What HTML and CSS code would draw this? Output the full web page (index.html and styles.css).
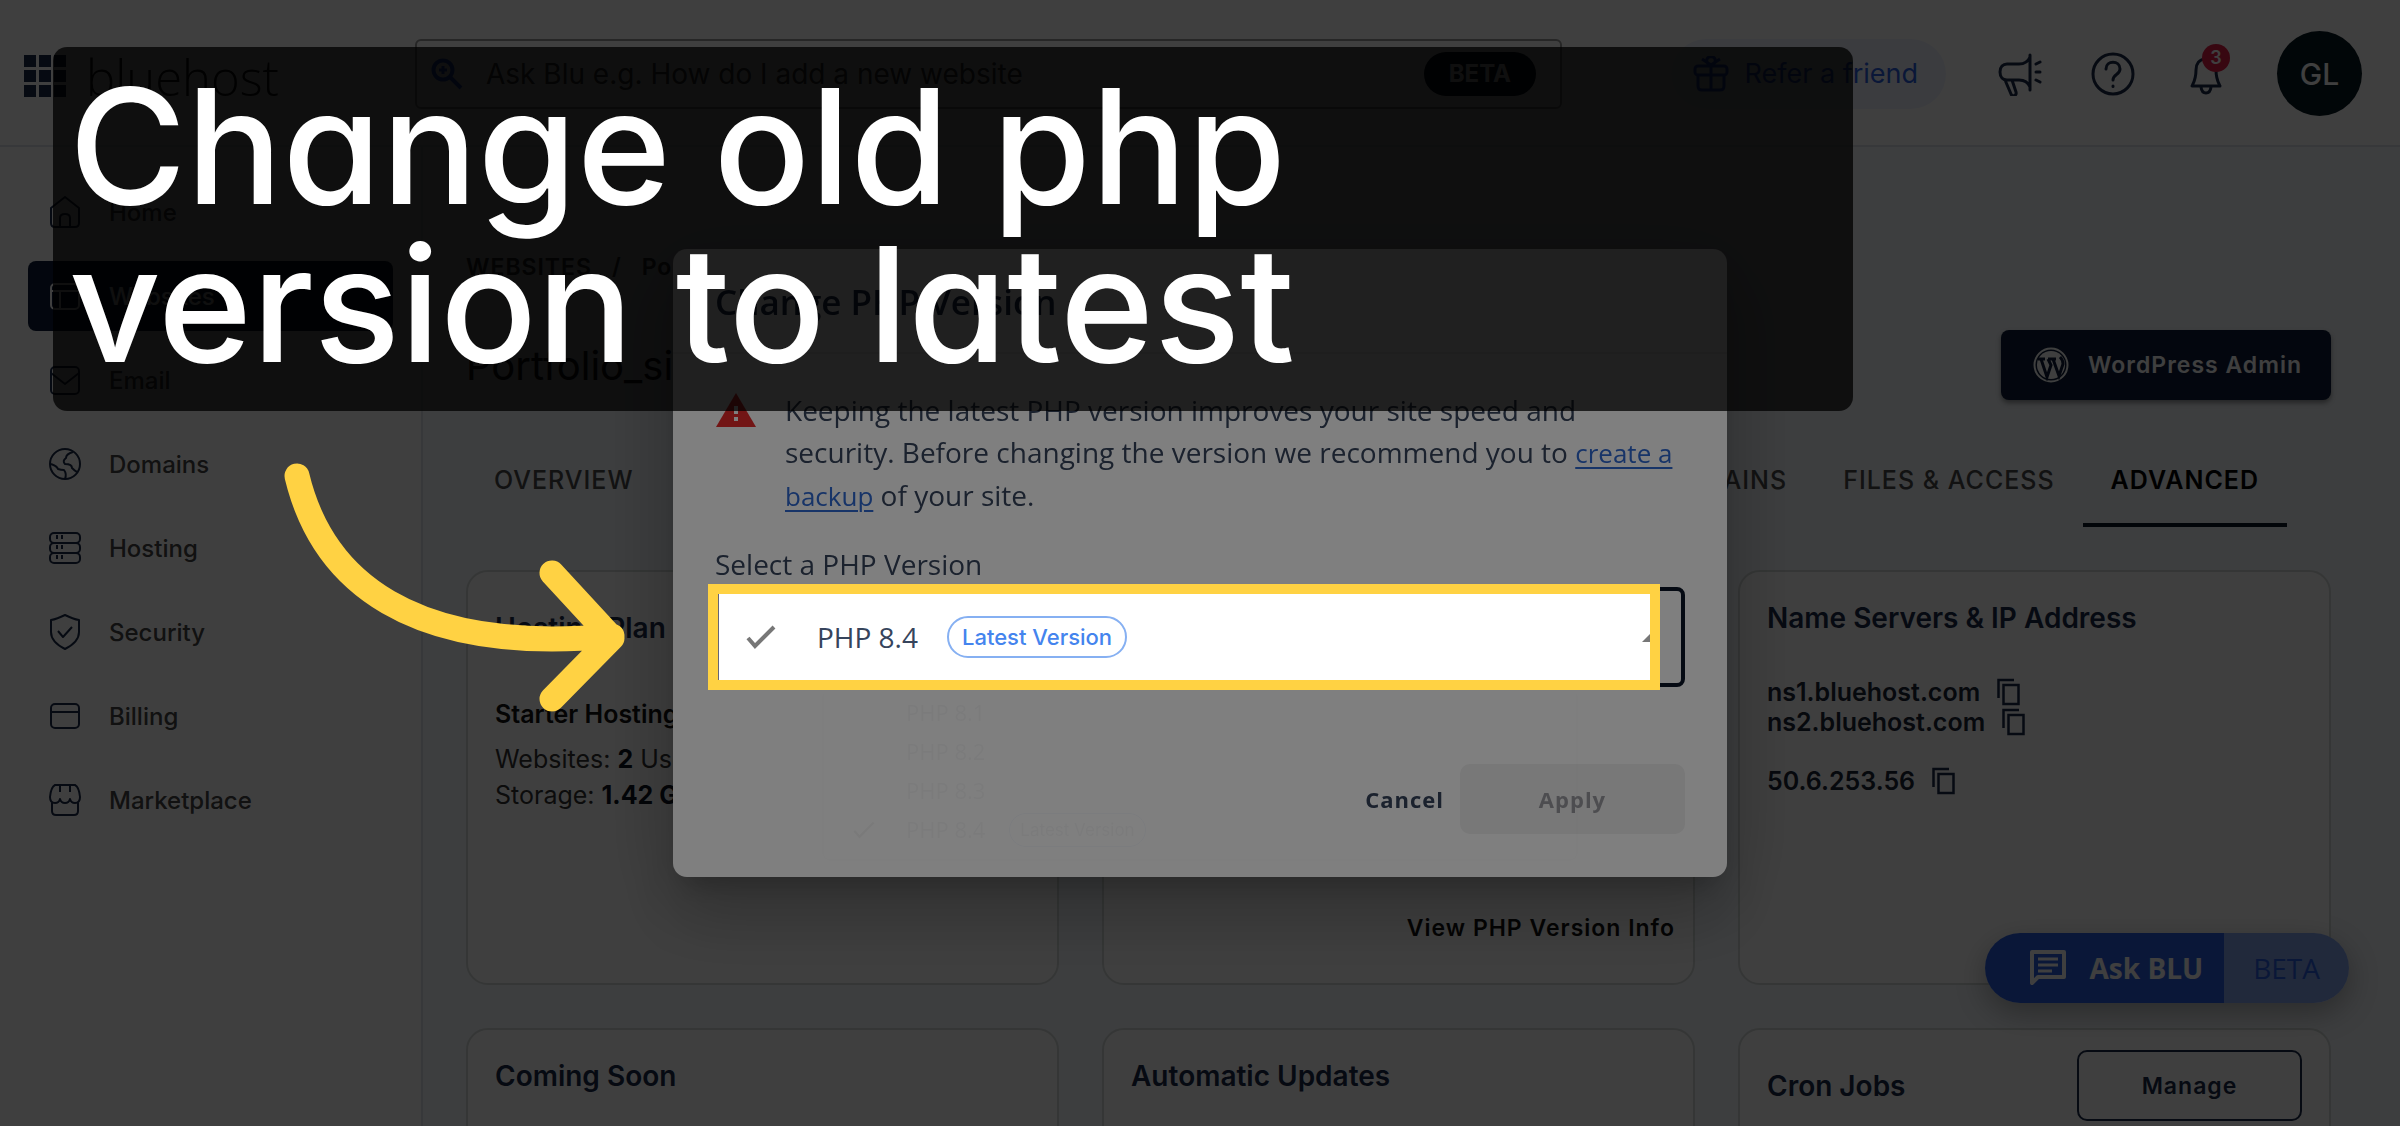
FILE: index.html
```html
<!DOCTYPE html>
<html lang="en">
<head>
<meta charset="UTF-8" />
<meta name="viewport" content="width=device-width, initial-scale=1" />
<title>Change PHP Version</title>
<link rel="stylesheet" href="styles.css">
</head>
<body>
<div class="app">
  <header class="topbar">
    <div class="brand">
      <svg class="apps" viewBox="0 0 42 43" fill="#1b2b49">
        <path d="M0 0h12v12H0zM15 0h12v12H15zM30 0h12v12H30zM0 15h12v12H0zM15 15h12v12H15zM30 15h12v12H30zM0 30h12v12H0zM15 30h12v12H15zM30 30h12v12H30z"/>
      </svg>
      <span class="logo">bluehost</span>
    </div>
    <div class="search">
      <svg viewBox="0 0 32 32" fill="none" stroke="#2b5fe0" stroke-width="4">
        <circle cx="12" cy="12" r="9.5"/><path d="M19 19l11 11"/><path d="M12 8v8M8 12h8" stroke-width="3"/>
      </svg>
      <input type="text" aria-label="Ask Blu" placeholder="Ask Blu e.g. How do I add a new website">
      <span class="beta">BETA</span>
    </div>
    <a class="refer" href="#">
      <svg viewBox="0 0 36 36" fill="none" stroke="#2b5fe0" stroke-width="3">
        <rect x="2" y="10" width="32" height="9" rx="3"/><path d="M5 19v11q0 4 4 4h18q4 0 4-4V19M18 10v24M18 10c-3-1-5-4-4-7s7-3 8 0-1 6-4 7zM18 9L9 3M18 9l9-6"/>
      </svg>
      Refer a friend
    </a>
    <div class="tools">
      <button class="tool" aria-label="News">
        <svg viewBox="0 0 44 44" fill="none" stroke="#1b2b49" stroke-width="3" stroke-linejoin="round" stroke-linecap="round">
          <path d="M32 3v35M32 5c-2 5-6 7-11 7H9c-4 0-7 3-7 8s3 8 7 8h12c5 0 9 2 11 7M7 28l6 14c1 3 6 2 5-2l-4-12"/>
          <path d="M38 12l4-2M38 20h4M38 28l4 2"/>
        </svg>
      </button>
      <button class="tool" aria-label="Help">
        <svg viewBox="0 0 44 44" fill="none" stroke="#1b2b49" stroke-width="3" stroke-linecap="round">
          <circle cx="22" cy="22" r="20"/><path d="M15 17c0-9 14-9 14 0 0 6-7 5-7 11M22 34v0.5"/>
        </svg>
      </button>
      <button class="tool" aria-label="Notifications">
        <svg viewBox="0 0 44 44" fill="none" stroke="#1b2b49" stroke-width="3" stroke-linejoin="round">
          <path d="M22 7c-7 0-10 5-10 11 0 9-2 12-4 16h28c-2-4-4-7-4-16 0-6-3-11-10-11z"/><path d="M17 35c1 8 9 8 10 0"/>
        </svg>
        <span class="count">3</span>
      </button>
      <button class="avatar">GL</button>
    </div>
  </header>

  <div class="layout">
    <nav class="sidebar">
      <a href="#"><svg viewBox="0 0 32 32"><path d="M2 12L16 1l14 11v15q0 4-4 4H6q-4 0-4-4zM11 31V22q0-4 5-4t5 4v9"/></svg>Home</a>
      <a href="#" class="active"><svg viewBox="0 0 32 32"><rect x="2" y="4" width="28" height="25" rx="4"/><path d="M2 11h28M11 11v18"/></svg>Websites</a>
      <a href="#"><svg viewBox="0 0 32 32"><rect x="2" y="3" width="28" height="27" rx="4"/><path d="M2 9l14 11L30 9"/></svg>Email</a>
      <a href="#"><svg viewBox="0 0 32 32"><circle cx="16" cy="16" r="15"/><path d="M2 16q6 2 7 5 3 1 6 1 3 4 1 9M24 4q-7 2-7 6-4 3-1 6 7 0 7 4 3 3 5 4"/></svg>Domains</a>
      <a href="#"><svg viewBox="0 0 32 32"><rect x="1" y="1" width="30" height="10" rx="4"/><rect x="1" y="11" width="30" height="10" rx="4"/><rect x="1" y="21" width="30" height="10" rx="4"/><path d="M8 3v4M13 3v4M8 13v4M13 13v4M8 23v4M13 23v4"/></svg>Hosting</a>
      <a href="#"><svg viewBox="0 0 32 36"><path d="M16 1q8 4 14 5v12q0 10-14 17Q2 28 2 18V6q6-1 14-5zM9 17l5 6 9-10"/></svg>Security</a>
      <a href="#"><svg viewBox="0 0 32 32"><rect x="2" y="4" width="28" height="24" rx="4"/><path d="M2 12h28"/></svg>Billing</a>
      <a href="#"><svg viewBox="0 0 32 32"><path d="M6 1h20q4 2 5 12 0 6-5 6-4 0-5-4-1 4-5 4t-5-4q-1 4-5 4-5 0-5-6Q2 3 6 1zM11 1v7M21 1v7M3 18v9q0 4 4 4h18q4 0 4-4v-9"/></svg>Marketplace</a>
    </nav>

    <main class="content">
      <div class="crumbs"><a href="#">WEBSITES</a><span>/</span><span>Portfolio_site</span></div>
      <div class="page-head">
        <h1>Portfolio_site</h1>
        <button class="wp-admin">
          <svg viewBox="0 0 36 36">
            <circle cx="18" cy="18" r="16.5" fill="none" stroke="#fff" stroke-width="2"/>
            <circle cx="18" cy="18" r="14" fill="#fff"/>
            <path d="M5 12h7M15 12h8M8 12l6 18 4-12-3-6M20 12l6 17 4-12q0-4-3-7" fill="none" stroke="#0c1b38" stroke-width="3"/>
          </svg>
          WordPress Admin
        </button>
      </div>
      <div class="tabs">
        <a href="#">OVERVIEW</a>
        <a href="#" class="push">DOMAINS</a>
        <a href="#">FILES &amp; ACCESS</a>
        <a href="#" class="active">ADVANCED</a>
      </div>

      <div class="cards">
        <section class="card">
          <div class="card-head tall"><h2>Hosting Plan</h2></div>
          <h3>Starter Hosting</h3>
          <p>Websites: <b>2</b> Used</p>
          <p>Storage: <b>1.42 GB</b></p>
        </section>
        <section class="card">
          <a class="info-link" href="#">View PHP Version Info</a>
        </section>
        <section class="card">
          <div class="card-head"><h2>Name Servers &amp; IP Address</h2></div>
          <ul class="servers">
            <li>ns1.bluehost.com <svg viewBox="0 0 24 28"><path d="M1.500 20V2H17M6.500 7h15v19h-15z"/></svg></li>
            <li>ns2.bluehost.com <svg viewBox="0 0 24 28"><path d="M1.500 20V2H17M6.500 7h15v19h-15z"/></svg></li>
            <li class="ip">50.6.253.56 <svg viewBox="0 0 24 28"><path d="M1.500 20V2H17M6.500 7h15v19h-15z"/></svg></li>
          </ul>
        </section>
        <section class="card">
          <div class="card-head"><h2>Coming Soon</h2></div>
        </section>
        <section class="card">
          <div class="card-head"><h2>Automatic Updates</h2></div>
        </section>
        <section class="card">
          <div class="card-head tall"><h2>Cron Jobs</h2><button class="manage">Manage</button></div>
        </section>
      </div>
    </main>
  </div>

  <button class="ask-blu">
    <span class="ask-main">
      <svg viewBox="0 0 36 36" fill="none" stroke="#fff" stroke-width="4"><path d="M2 33V2h32v25H8z" stroke-linejoin="round"/><path d="M8 9h20M8 15h20M8 21h14" stroke-width="3"/></svg>
      Ask BLU
    </span>
    <span class="ask-beta">BETA</span>
  </button>
</div>

<div class="backdrop">
  <div class="modal" role="dialog" aria-labelledby="modal-title">
    <div class="modal-head"><h2 id="modal-title">Change PHP Version</h2></div>
    <div class="modal-body">
      <div class="notice">
        <svg viewBox="0 0 40 34"><path d="M20 0l20 34H0z" fill="#e42a2a"/><path d="M20 13v8M20 24v4" stroke="#fff" stroke-width="4"/></svg>
        <p>Keeping the latest PHP version improves your site speed and security. Before changing the version we recommend you to <a href="#">create a backup</a> of your site.</p>
      </div>
      <label for="php">Select a PHP Version</label>
      <select id="php"><option>PHP 8.4</option></select>
      <!-- menu on its way out -->
      <ul class="menu">
        <li>PHP 8.1</li>
        <li>PHP 8.2</li>
        <li>PHP 8.3</li>
        <li><svg viewBox="0 0 30 24"><path d="M2 13l7 8L28 2"/></svg>PHP 8.4 <span>Latest Version</span></li>
      </ul>
      <div class="actions">
        <button class="cancel">Cancel</button>
        <button class="apply" disabled>Apply</button>
      </div>
    </div>
  </div>
</div>

<div class="dim"></div>
<div class="caption">Change old php<br>version to latest</div>
<div class="highlight">
  <svg class="check" viewBox="0 0 30 24"><path d="M2 13l7 8L28 2"/></svg>
  <span class="version">PHP 8.4</span>
  <span class="latest">Latest Version</span>
  <span class="caret"></span>
</div>
<svg class="arrow" viewBox="0 0 350 260">
  <path d="M17 17C42 121 130 196 332 177M272 114L332 179L272 240"/>
</svg>
</body>
</html>
```

FILE: styles.css
```css
* { box-sizing: border-box; }
body { margin: 0; font-family: Inter, "Liberation Sans", sans-serif; font-size: 24px; color: #1b2b49; background: #fff; }
a { color: inherit; text-decoration: none; }
button { font: inherit; color: inherit; border: none; background: none; padding: 0; cursor: pointer; }
h1, h2, h3, p, ul { margin: 0; padding: 0; }
ul { list-style: none; }
svg { flex: none; display: block; }

.app { position: relative; height: 100vh; overflow: hidden; display: flex; flex-direction: column; }

/* top bar */
.topbar { flex: none; height: 147px; display: flex; align-items: center; padding: 2px 38px 0 24px; border-bottom: 2px solid #dfe3ea; }
.brand { width: 391px; display: flex; align-items: center; gap: 20px; padding-top: 6px; }
.apps { width: 42px; height: 43px; }
.logo { font-family: "Open Sans", sans-serif; font-weight: 300; font-size: 49px; line-height: 60px; color: #111; }
.search { width: 1147px; height: 70px; display: flex; align-items: center; padding: 0 24px 0 14px; border: 2px solid #999; border-radius: 6px; }
.search svg { width: 32px; height: 32px; }
.search input { flex: 1; margin-left: 21px; border: none; outline: none; font: inherit; font-size: 28px; background: none; }
.search input::placeholder { color: #444; opacity: 1; }
.beta { background: #061322; color: #fff; font-weight: 700; font-size: 24px; line-height: 44px; padding: 0 25px; border-radius: 22px; }
.refer { margin-left: auto; height: 70px; display: flex; align-items: center; gap: 15px; padding: 0 28px 0 22px; border-radius: 35px; background: #eff3fc; color: #2b5fe0; font-size: 27px; }
.refer svg { width: 36px; height: 36px; }
.tools { display: flex; align-items: center; margin-left: 52px; gap: 49px; }
.tool { position: relative; }
.tool svg { width: 44px; height: 44px; }
.count { position: absolute; top: -8px; left: 18px; width: 28px; height: 28px; border-radius: 50%; background: #e01e46; color: #fff; font-size: 18px; font-weight: 600; line-height: 28px; text-align: center; }
.avatar { width: 85px; height: 85px; border-radius: 50%; background: #071820; color: #fff; font-size: 30px; font-weight: 500; }

/* sidebar */
.layout { flex: 1; display: flex; min-height: 0; }
.sidebar { flex: none; width: 423px; padding: 30px 28px; display: flex; flex-direction: column; gap: 14px; border-right: 2px solid #dfe3ea; }
.sidebar a { flex: none; height: 70px; display: flex; align-items: center; gap: 28px; padding-left: 21px; border-radius: 8px; color: #444; font-weight: 500; }
.sidebar svg { width: 32px; height: 36px; fill: none; stroke: #1b2b49; stroke-width: 2; stroke-linejoin: round; }
.sidebar .active { background: #0c1b38; color: #fff; }
.sidebar .active svg { stroke: #fff; }

/* content */
.content { flex: 1; min-width: 0; background: #f4f8fc; padding: 105px 69px 0 43px; }
.crumbs { display: flex; gap: 20px; height: 30px; align-items: center; font-size: 23px; font-weight: 600; letter-spacing: 1px; color: #333; }
.page-head { display: flex; justify-content: space-between; align-items: center; margin-top: 48px; }
.page-head h1 { font-size: 40px; font-weight: 400; color: #111; }
.wp-admin { display: flex; align-items: center; gap: 19px; height: 70px; padding: 0 29px 0 32px; border-radius: 8px; background: #0c1b38; color: #fff; font-size: 23px; font-weight: 600; letter-spacing: 1px; box-shadow: 0 3px 5px rgba(0, 0, 0, .4); }
.wp-admin svg { width: 36px; height: 36px; }
.tabs { display: flex; height: 88px; margin: 39px 44px 43px 0; }
.tabs a { display: flex; align-items: center; padding: 0 28px 2px; font-size: 25px; font-weight: 500; letter-spacing: 1px; color: #4a4a4a; border-bottom: 4px solid transparent; }
.tabs .push { margin-left: auto; }
.tabs .active { color: #000; font-weight: 600; border-color: #0a1426; }

.cards { display: grid; grid-template-columns: repeat(3, 1fr); grid-auto-rows: 415px; gap: 43px; }
.card { position: relative; background: #fff; border: 2px solid #d5dbd9; border-radius: 22px; padding: 20px 27px; display: flex; flex-direction: column; }
.card-head { display: flex; align-items: center; justify-content: space-between; height: 52px; }
.card-head.tall { height: 71px; }
.card h2 { font-size: 28px; font-weight: 600; }
.card h3 { font-size: 25px; font-weight: 600; line-height: 36px; margin: 33px 0 9px; color: #111; }
.card p { font-size: 25px; line-height: 36px; color: #333; }
.card p b { color: #0c1220; }
.info-link { margin: auto -9px 20px auto; line-height: 30px; font-size: 23px; font-weight: 600; letter-spacing: 1px; color: #111; }
.servers { margin-top: 33px; font-size: 25px; font-weight: 600; color: #1b2436; }
.servers li { display: flex; align-items: center; gap: 17px; height: 30px; }
.servers .ip { margin-top: 29px; }
.servers svg { width: 24px; height: 28px; fill: none; stroke: #1b2b49; stroke-width: 2.5; }
.manage { width: 225px; height: 71px; border: 2px solid #1b2b49; border-radius: 10px; font-size: 23px; font-weight: 600; letter-spacing: 1px; }

.ask-blu { position: absolute; right: 51px; bottom: 123px; height: 70px; display: flex; border-radius: 35px; overflow: hidden; font-family: "Open Sans", sans-serif; font-size: 28px; box-shadow: 0 10px 30px rgba(0, 0, 0, .3); }
.ask-main { display: flex; align-items: center; gap: 24px; padding: 0 21px 0 45px; background: #2b5fe0; color: #fff; font-weight: 700; }
.ask-main svg { width: 36px; height: 36px; }
.ask-beta { display: flex; align-items: center; padding: 0 29px; background: #86a5ee; color: #2b5fe0; }

/* dialog */
.backdrop { position: fixed; inset: 0; display: flex; align-items: center; justify-content: center; background: rgba(0, 0, 0, .5); font-family: "Open Sans", sans-serif; font-size: 28px; line-height: 42px; color: #36445c; }
.modal { position: relative; width: 1054px; background: #fff; border-radius: 14px; box-shadow: 0 19px 26px -12px rgba(0, 0, 0, .2), 0 41px 66px 5px rgba(0, 0, 0, .14), 0 15px 80px 14px rgba(0, 0, 0, .12); }
.modal-head { height: 105px; padding: 32px 42px 0; border-bottom: 2px solid #eee; }
.modal-head h2 { font-size: 35px; font-weight: 600; color: #1b2b49; }
.modal-body { padding: 35px 42px 43px; }
.notice { display: flex; gap: 29px; }
.notice svg { width: 40px; height: 34px; margin: 4px 0 0 1px; }
.notice p { flex: 1; }
.notice a { font-size: 26px; font-weight: 500; color: #2f68d0; text-decoration: underline; text-decoration-thickness: 2px; text-underline-offset: 4px; }
.modal label { display: block; margin: 26px 0 2px; }
.modal select { display: block; width: 100%; height: 100px; padding: 0 100px; appearance: none; border: 4px solid #0a1426; border-radius: 8px; background: #fff; font: inherit; color: inherit; }
.actions { display: flex; justify-content: flex-end; margin-top: 77px; gap: 16px; }
.actions button { height: 70px; font-size: 22px; font-weight: 700; letter-spacing: 1px; border-radius: 10px; }
.apply { width: 225px; background: #f0f0f0; color: #9a9aa0; }

.menu { position: absolute; left: 149px; right: 149px; bottom: 16px; padding: 4px 0 10px 82px; border: 2px solid #ddd; border-top: none; border-radius: 8px; font-size: 22px; line-height: 39px; opacity: .04; pointer-events: none; }
.menu li { display: flex; align-items: center; }
.menu svg { position: absolute; left: 28px; width: 24px; height: 18px; fill: none; stroke: #000; stroke-width: 3; }
.menu span { margin-left: 24px; padding: 0 10px; border: 1px solid #2f68d0; border-radius: 17px; line-height: 32px; font-family: Inter, sans-serif; font-size: 17px; }

/* annotations */
.dim { position: fixed; inset: 0; background: rgba(0, 0, 0, .5); }
.caption { position: absolute; top: 47px; left: 53px; width: 75%; padding: 20px 16px 28px; border-radius: 14px; background: rgba(0, 0, 0, .75); color: #fff; font-size: 160px; font-weight: 500; line-height: 158px; font-feature-settings: "cv11"; }
.highlight { position: absolute; left: calc(50% - 492px); top: calc(50% + 21px); width: 952px; height: 106px; display: flex; align-items: center; padding-left: 28px; border: 10px solid #ffd243; background: #fff; overflow: hidden; box-shadow: inset 1px 0 #667; font-family: "Open Sans", sans-serif; font-size: 28px; color: #36445c; }
.check { width: 30px; height: 24px; fill: none; stroke: #777; stroke-width: 4; }
.version { margin-left: 41px; }
.latest { margin-left: 29px; padding: 0 13px; border: 2px solid #86b0f2; border-radius: 21px; line-height: 38px; font-family: Inter, sans-serif; font-size: 22px; font-weight: 500; color: #4484ee; }
.caret { margin: 0 -10px 0 auto; border: 9px solid transparent; border-top: none; border-bottom-color: #777; }
.arrow { position: absolute; left: 280px; top: 459px; width: 350px; height: 260px; fill: none; stroke: #ffd243; stroke-width: 25; stroke-linecap: round; stroke-linejoin: round; }
```
